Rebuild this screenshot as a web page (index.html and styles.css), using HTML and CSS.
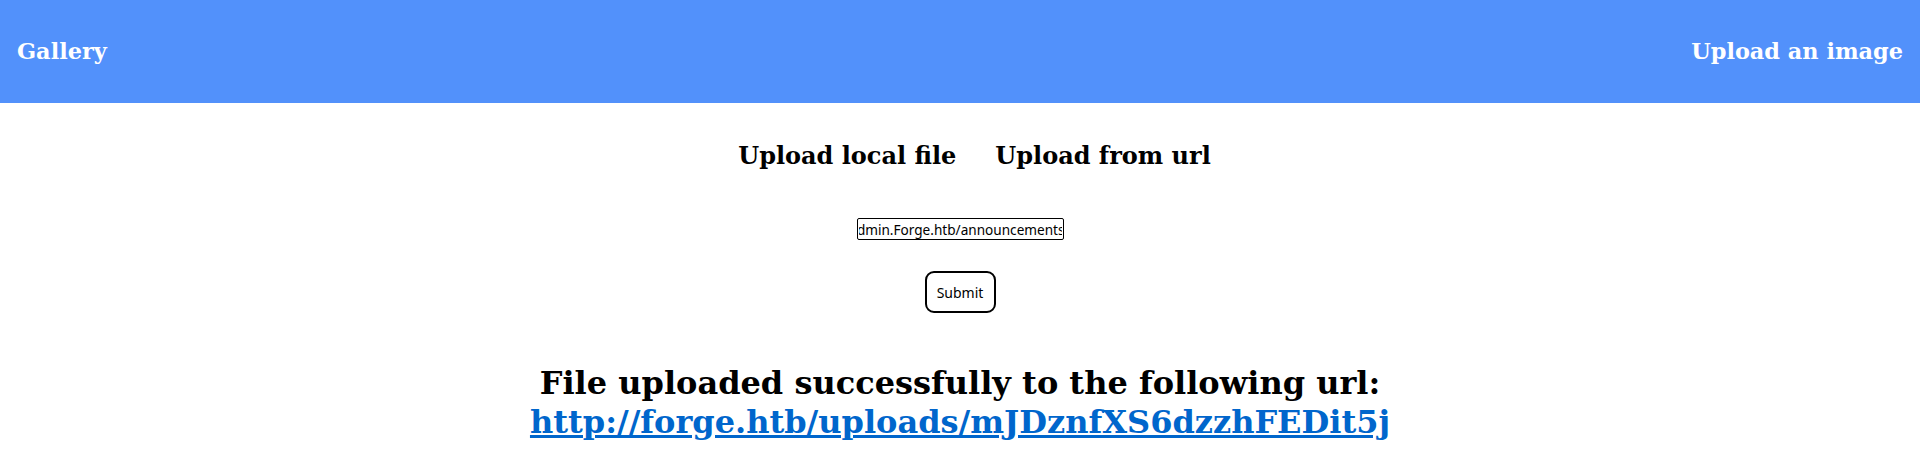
FILE: index.html
```html
<!DOCTYPE html>
<html>
<head>
<meta charset="utf-8">
<title>Gallery</title>
<link rel="stylesheet" href="styles.css">
</head>
<body>
<header class="topbar">
  <a class="nav-link" href="#">Gallery</a>
  <a class="nav-link" href="#">Upload an image</a>
</header>
<main class="content">
  <div class="tabs">
    <h2 class="tab">Upload local file</h2>
    <h2 class="tab">Upload from url</h2>
  </div>
  <form class="url-form">
    <input class="url-input" type="text" value="http://admin.Forge.htb/announcements">
    <button class="submit-btn" type="button">Submit</button>
  </form>
  <h1 class="result">File uploaded successfully to the following url:<br><a class="result-link" href="#">http://forge.htb/uploads/mJDznfXS6dzzhFEDit5j</a></h1>
</main>
</body>
</html>
```
FILE: styles.css
```css
html, body {
  margin: 0;
  padding: 0;
  background: #ffffff;
  font-family: "DejaVu Serif", serif;
}

.topbar {
  height: 103px;
  background: #5291fb;
  display: flex;
  justify-content: space-between;
  align-items: center;
  padding: 0 17px;
  box-sizing: border-box;
}

.nav-link {
  color: #ffffff;
  font-weight: bold;
  font-size: 22.4px;
  text-decoration: none;
  padding-bottom: 2px;
}

.content {
  display: flex;
  flex-direction: column;
  align-items: center;
}

.tabs {
  display: flex;
  gap: 39px;
  padding-left: 29px;
  margin-top: 39px;
}

.tab {
  margin: 0;
  font-size: 24px;
  font-weight: bold;
  color: #000;
  line-height: 28px;
}

.url-form {
  display: flex;
  flex-direction: column;
  align-items: center;
  margin-top: 48px;
}

.url-input {
  width: 207px;
  height: 22px;
  box-sizing: border-box;
  border: 1px solid #000;
  border-radius: 2px;
  font-family: "Noto Sans", sans-serif;
  font-size: 13.6px;
  padding: 0 1px;
  color: #000;
  direction: rtl;
  text-align: left;
  text-indent: -3px;
}

.submit-btn {
  margin-top: 31px;
  width: 71px;
  height: 42px;
  box-sizing: border-box;
  border: 2px solid #000;
  border-radius: 9px;
  background: #fff;
  font-family: "Noto Sans", sans-serif;
  font-size: 14px;
  color: #000;
}

.result {
  margin: 51px 0 0;
  font-size: 32px;
  font-weight: bold;
  text-align: center;
  line-height: 39px;
  color: #000;
}

.result-link {
  color: #0066cc;
}
```
